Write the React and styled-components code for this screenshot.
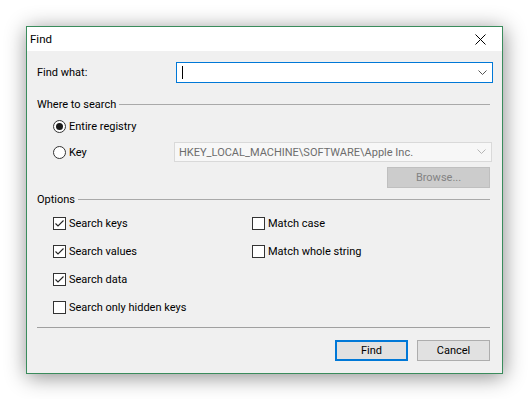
import React from "react";
import styled, { createGlobalStyle } from "styled-components";

const Global = createGlobalStyle`
  html, body { margin: 0; padding: 0; background: #ffffff; }
  body { font-family: "Segoe UI", Roboto, "Noto Sans", sans-serif; font-size: 11px; color: #000; }
  #root { width: 528px; height: 399px; overflow: hidden; }
`;

const Stage = styled.div`
  padding: 26px 0 0 26px;
`;

const Window = styled.div`
  width: 475px;
  height: 346px;
  border: 1px solid #3a8c5c;
  background: #f0f0f0;
  box-shadow: 1px 3px 20px rgba(0, 0, 0, 0.45);
  display: flex;
  flex-direction: column;
`;

const TitleBar = styled.div`
  height: 24px;
  background: #ffffff;
  display: flex;
  align-items: center;
  justify-content: space-between;
  padding-left: 3px;
`;

const Title = styled.span`
  font-size: 11.5px;
  color: #000;
`;

const CloseBtn = styled.div`
  width: 46px;
  height: 24px;
  display: flex;
  align-items: center;
  justify-content: center;
  margin-right: -1px;
`;

const Content = styled.div`
  flex: 1;
  padding: 11px 11px 0 9px;
  display: flex;
  flex-direction: column;
`;

const FieldRow = styled.div`
  display: flex;
  align-items: center;
  height: 21px;
`;

const Label = styled.span`
  width: 139px;
  padding-left: 1px;
`;

const Combo = styled.div`
  flex: 1;
  height: ${(p) => p.$h}px;
  box-sizing: border-box;
  border: 1px solid ${(p) => (p.$disabled ? "#d9d9d9" : "#0078d7")};
  background: ${(p) => (p.$disabled ? "#f7f7f7" : "#ffffff")};
  color: ${(p) => (p.$disabled ? "#6d6d6d" : "#000")};
  margin-right: ${(p) => p.$mr}px;
  display: flex;
  align-items: center;
  padding-left: ${(p) => p.$pl}px;
  position: relative;
`;

const Caret = styled.span`
  width: 1px;
  height: 13px;
  background: #000;
`;

const Chevron = styled.svg`
  position: absolute;
  right: 5px;
  top: 50%;
  margin-top: -3px;
`;

const GroupHeader = styled.div`
  display: flex;
  align-items: center;
  height: 14px;
  margin-top: ${(p) => p.$mt}px;
  padding-left: 1px;
  gap: 3px;
  &::after {
    content: "";
    flex: 1;
    height: 1px;
    background: #a9a9a9;
    margin-right: 1px;
  }
`;

const OptionRow = styled.div`
  display: flex;
  align-items: center;
  height: 20px;
  margin-top: ${(p) => p.$mt}px;
  padding-left: 17px;
`;

const RadioCircle = styled.span`
  width: 11px;
  height: 11px;
  border: 1px solid #333;
  border-radius: 50%;
  background: #fff;
  display: flex;
  align-items: center;
  justify-content: center;
  flex-shrink: 0;
  margin-right: 3px;
  &::after {
    content: "";
    display: ${(p) => (p.$on ? "block" : "none")};
    width: 7px;
    height: 7px;
    border-radius: 50%;
    background: #1a1a1a;
  }
`;

const KeyLabel = styled.span`
  width: 105px;
`;

const BrowseRow = styled.div`
  display: flex;
  justify-content: flex-end;
  margin-top: 5px;
  padding-right: 1px;
`;

const Button = styled.div`
  width: ${(p) => p.$w}px;
  height: 21px;
  box-sizing: border-box;
  border: ${(p) => (p.$default ? "2px solid #0078d7" : p.$disabled ? "1px solid #bfbfbf" : "1px solid #adadad")};
  background: ${(p) => (p.$disabled ? "#cccccc" : "#e1e1e1")};
  color: ${(p) => (p.$disabled ? "#838383" : "#000")};
  display: flex;
  align-items: center;
  justify-content: center;
`;

const OptionsGrid = styled.div`
  display: grid;
  grid-template-columns: 199px 1fr;
  grid-auto-rows: 28px;
  margin-top: 3px;
  padding-left: 17px;
`;

const CheckItem = styled.div`
  display: flex;
  align-items: center;
  grid-column: ${(p) => p.$col};
`;

const Box = styled.span`
  width: 11px;
  height: 11px;
  border: 1px solid #333;
  background: #fff;
  margin-right: 3px;
  flex-shrink: 0;
  display: flex;
  align-items: center;
  justify-content: center;
`;

const Separator = styled.div`
  height: 1px;
  background: #a0a0a0;
  margin: 6px 1px 0 1px;
`;

const ButtonRow = styled.div`
  display: flex;
  justify-content: flex-end;
  gap: 9px;
  margin-top: 12px;
  padding-right: 1px;
`;

const Check = ({ checked, children, col }) => (
  <CheckItem $col={col}>
    <Box>
      {checked && (
        <svg width="11" height="11" viewBox="0 0 11 11">
          <path d="M1.5 5.5 L4 8 L9.5 2.5" fill="none" stroke="#222" strokeWidth="1.1" />
        </svg>
      )}
    </Box>
    <span>{children}</span>
  </CheckItem>
);

export default function App() {
  return (
    <>
      <Global />
      <Stage>
        <Window>
          <TitleBar>
            <Title>Find</Title>
            <CloseBtn>
              <svg width="11" height="11" viewBox="0 0 11 11">
                <path d="M0.5 0.5 L10.5 10.5 M10.5 0.5 L0.5 10.5" stroke="#000" strokeWidth="1" />
              </svg>
            </CloseBtn>
          </TitleBar>
          <Content>
            <FieldRow>
              <Label>Find what:</Label>
              <Combo $h={21} $mr={-2} $pl={5}>
                <Caret />
                <Chevron width="9" height="6" viewBox="0 0 9 6">
                  <path d="M0.5 0.5 L4.5 4.5 L8.5 0.5" fill="none" stroke="#555" strokeWidth="1" />
                </Chevron>
              </Combo>
            </FieldRow>
            <GroupHeader $mt={14}>Where to search</GroupHeader>
            <OptionRow $mt={5}>
              <RadioCircle $on />
              <span>Entire registry</span>
            </OptionRow>
            <OptionRow $mt={6}>
              <RadioCircle />
              <KeyLabel>Key</KeyLabel>
              <Combo $disabled $h={20} $mr={-1} $pl={4}>
                HKEY_LOCAL_MACHINE\SOFTWARE\Apple Inc.
                <Chevron width="9" height="6" viewBox="0 0 9 6">
                  <path d="M0.5 0.5 L4.5 4.5 L8.5 0.5" fill="none" stroke="#b5b5b5" strokeWidth="1" />
                </Chevron>
              </Combo>
            </OptionRow>
            <BrowseRow>
              <Button $w={103} $disabled>Browse...</Button>
            </BrowseRow>
            <GroupHeader $mt={4}>Options</GroupHeader>
            <OptionsGrid>
              <Check checked col={1}>Search keys</Check>
              <Check col={2}>Match case</Check>
              <Check checked col={1}>Search values</Check>
              <Check col={2}>Match whole string</Check>
              <Check checked col={1}>Search data</Check>
              <Check col={1}>Search only hidden keys</Check>
            </OptionsGrid>
            <Separator />
            <ButtonRow>
              <Button $w={73} $default>Find</Button>
              <Button $w={73}>Cancel</Button>
            </ButtonRow>
          </Content>
        </Window>
      </Stage>
    </>
  );
}
